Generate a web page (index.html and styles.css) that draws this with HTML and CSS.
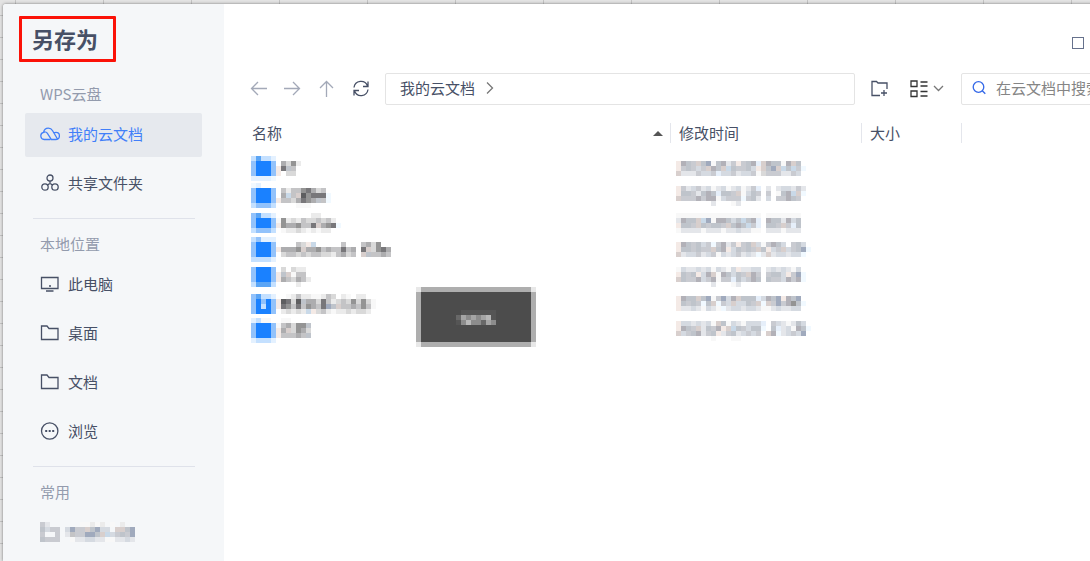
FILE: index.html
```html
<!DOCTYPE html>
<html lang="zh-CN">
<head>
  <meta charset="UTF-8">
  <meta name="viewport" content="width=device-width, initial-scale=1.0">
  <title>另存为</title>
  <link rel="stylesheet" href="styles.css">
</head>
<body>
  <div class="dialog">
    <aside class="sidebar">
      <h1 class="title">另存为</h1>

      <nav class="group">
        <h2>WPS云盘</h2>
        <a class="item active" href="#">
          <svg width="20" height="18" viewBox="0 0 20 18"><path d="M4.600 14.500H4.200A3.600 3.600 0 0 1 3.600 7.400C4 4.800 6 3.200 8.300 3.200c2 0 3.400.9 4.300 2.500l5.200 8.800M4.600 14.500h5.800M3.600 7.400c1-.6 2.900-.4 3.800.9l4 6.200h4.200c2.300 0 3.800-1.600 3.800-3.600s-1.500-3.500-3.400-3.500c-.8 0-1.500.2-2.100.5"/></svg>
          我的云文档
        </a>
        <a class="item" href="#">
          <svg width="20" height="18" viewBox="0 0 20 18"><circle cx="10" cy="4" r="3"/><circle cx="5" cy="13" r="3.200"/><circle cx="15" cy="13" r="3.200"/><path d="M10 7v2.500M7.500 10.800L10 9.500l2.500 1.300"/></svg>
          共享文件夹
        </a>
      </nav>

      <nav class="group">
        <h2>本地位置</h2>
        <a class="item" href="#">
          <svg width="20" height="18" viewBox="0 0 20 18"><path d="M1.500 2.500h16.500v11h-16.500zM6 16h7.500M9 11h2"/></svg>
          此电脑
        </a>
        <a class="item" href="#">
          <svg width="20" height="18" viewBox="0 0 20 18"><path d="M1.500 15.500v-13.500h5.500l2 2.500h9v11z"/></svg>
          桌面
        </a>
        <a class="item" href="#">
          <svg width="20" height="18" viewBox="0 0 20 18"><path d="M1.500 15.500v-13.500h5.500l2 2.500h9v11z"/></svg>
          文档
        </a>
        <a class="item" href="#">
          <svg width="20" height="18" viewBox="0 0 20 18"><circle cx="9.700" cy="9" r="8.200"/><path class="dots" d="M5.200 9h2M8.700 9h2M12.200 9h2"/></svg>
          浏览
        </a>
      </nav>

      <nav class="group">
        <h2>常用</h2>
        <a class="item" href="#" aria-label="常用文件夹"><svg class="mosaic" data-name="recent"></svg></a>
      </nav>
    </aside>

    <main class="main">
      <header class="titlebar">
        <button type="button" class="maximize" aria-label="最大化"></button>
      </header>

      <div class="toolbar">
        <div class="nav">
          <button type="button" class="dim" aria-label="后退"><svg width="18" height="18" viewBox="0 0 18 18"><path d="M17 8.500H1.500M8 2L1.500 8.500 8 15"/></svg></button>
          <button type="button" class="dim" aria-label="前进"><svg width="18" height="18" viewBox="0 0 18 18"><path d="M0 8.500h15.500M9 2L15.500 8.500 9 15"/></svg></button>
          <button type="button" class="dim" aria-label="向上"><svg width="18" height="18" viewBox="0 0 18 18"><path d="M8.500 17V1.500M2 8L8.500 1.500 15 8"/></svg></button>
          <button type="button" aria-label="刷新"><svg width="18" height="18" viewBox="0 0 18 18"><path d="M2 7.500a7 7 0 0 1 13.500-1.500M16 1.500v5h-5M16 9.500a7 7 0 0 1-13.500 1.500M2 15.500v-5h5"/></svg></button>
        </div>
        <div class="path">
          <a href="#">我的云文档</a>
          <svg width="10" height="16" viewBox="0 0 10 16"><path d="M2 2.500L7.500 8 2 13.500"/></svg>
        </div>
        <button type="button" class="new-folder" aria-label="新建文件夹"><svg width="18" height="18" viewBox="0 0 18 18"><path d="M9 15.500H1V1.500H5.500l1.500 1.500h9V9M13 10v6M10 13h6"/></svg></button>
        <button type="button" class="view" aria-label="视图"><svg width="34" height="18" viewBox="0 0 34 18"><path class="dark" d="M1 1h6v5.500H1zM1 11h6V16.500H1zM10.500 2h7M10.500 6h7M10.500 11.500h7M10.500 16h7"/><path d="M24 6l4.500 4.500 4.500-4.500"/></svg></button>
        <label class="search">
          <svg width="16" height="16" viewBox="0 0 16 16"><circle cx="6.500" cy="7" r="5.300"/><path d="M10.300 10.800l3 3"/></svg>
          <input type="text" placeholder="在云文档中搜索" aria-label="在云文档中搜索">
        </label>
      </div>

      <table class="files">
        <thead>
          <tr>
            <th class="col-name"><div>名称<span class="sort"></span></div></th>
            <th class="col-date"><div>修改时间</div></th>
            <th class="col-size"><div>大小</div></th>
            <th class="col-rest"><div></div></th>
          </tr>
        </thead>
        <tbody id="rows"></tbody>
      </table>

      <div class="toast" role="status"><svg class="mosaic" data-name="toast"></svg></div>
    </main>
  </div>
  <script src="script.js"></script>
</body>
</html>
```
FILE: styles.css
```css
body {
  margin: 0;
  height: 100vh;
  overflow: hidden;
  box-sizing: border-box;
  padding: 4px 0 0 3px;
  font-family: "Noto Sans CJK SC", sans-serif;
  font-size: 15px;
  line-height: 20px;
  color: #475066;
  /* sheet cells behind the dialog */
  background-color: #e3e3e3;
  background-image:
    linear-gradient(90deg, #c3c3c3 1px, transparent 1px),
    linear-gradient(#c3c3c3 1px, transparent 1px);
  background-size: 88px 22px;
  background-position: 15px 15px;
}

/* the dialog runs past the right edge of the window */
.dialog {
  display: flex;
  height: 100%;
  margin-right: -60px;
  background: #fff;
  border-top-left-radius: 3px;
  box-shadow: 0 0 3px rgba(0, 0, 0, 0.5);
}

svg {
  flex: none;
  fill: none;
  stroke: currentColor;
  stroke-width: 1.3;
}

a {
  color: inherit;
  text-decoration: none;
}

button {
  display: flex;
  padding: 0;
  border: none;
  background: none;
  color: #475066;
  cursor: pointer;
}

/* Sidebar */
.sidebar {
  box-sizing: border-box;
  flex: none;
  width: 221px;
  padding: 12px 22px 0;
  overflow: hidden;
  background: #f5f7f9;
  border-top-left-radius: 3px;
}

.title {
  box-sizing: border-box;
  width: 97px;
  height: 46px;
  margin: 0 0 10px -6px;
  padding-left: 10px;
  border: 3px solid #fb1208;
  border-radius: 1px;
  font-size: 22px;
  line-height: 38px;
}

.group {
  position: relative;
  padding: 12px 0;
}

.group + .group {
  padding-top: 16px;
}

.group + .group::before {
  content: "";
  position: absolute;
  top: 0;
  left: 8px;
  right: 7px;
  border-top: 1px solid #dfe2ea;
}

.group h2 {
  margin: 0 0 9px;
  padding-left: 15px;
  font-size: 15px;
  font-weight: normal;
  color: #939bad;
}

.item {
  box-sizing: border-box;
  display: flex;
  align-items: center;
  gap: 8px;
  height: 44px;
  padding: 0 0 2px 15px;
  border-radius: 2px;
}

.item + .item {
  margin-top: 5px;
}

.item.active {
  background: #e6e9ee;
  color: #417ff9;
}

.dots {
  stroke-width: 2;
}

/* Main area */
.main {
  position: relative;
  flex: 1;
  min-width: 0;
  padding-left: 26px;
}

.titlebar {
  display: flex;
  justify-content: flex-end;
  height: 36px;
  padding: 33px 66px 0 0;
}

.maximize {
  width: 12px;
  height: 12px;
  border: 1px solid #66718c;
}

.toolbar {
  display: flex;
  align-items: center;
  height: 32px;
  padding-right: 20px;
}

.nav {
  display: flex;
  gap: 16px;
  margin-right: 15px;
}

.dim {
  color: #a3a9b8;
}

.path,
.search {
  display: flex;
  align-items: center;
  box-sizing: border-box;
  height: 32px;
  padding-bottom: 2px;
  border: 1px solid #e4e4e4;
  border-radius: 2px;
}

.path {
  flex: 1;
  gap: 10px;
  padding-left: 14px;
}

.path svg {
  color: #777;
}

.new-folder {
  margin: 0 21px 0 16px;
}

.view {
  margin-right: 17px;
  color: #777;
}

.dark {
  stroke: #333;
}

.search {
  width: 169px;
  gap: 8px;
  padding-left: 10px;
}

.search svg {
  color: #3468e8;
}

.search input {
  min-width: 0;
  width: 100%;
  padding: 0;
  border: none;
  outline: none;
  font: inherit;
}

.search input::placeholder {
  color: #858585;
}

/* File list */
.files {
  width: 100%;
  margin-top: 18px;
  table-layout: fixed;
  border-collapse: collapse;
}

.files th {
  padding: 0 0 12px;
  font-weight: normal;
  text-align: left;
}

.files th div {
  display: flex;
  align-items: center;
  justify-content: space-between;
  height: 20px;
  padding-left: 8px;
  border-left: 1px solid #e4e6ec;
}

.files th.col-name div {
  padding: 0 7px 0 2px;
  border: none;
}

.col-date {
  width: 191px;
}

.col-size {
  width: 100px;
}

.col-rest {
  width: 189px;
}

.sort {
  border: 5px solid transparent;
  border-top: none;
  border-bottom: 5px solid #555;
}

.files td {
  height: 27px;
  padding: 0 0 0 1px;
}

.files td + td {
  padding-left: 6px;
}

.mosaic {
  display: block;
  stroke: none;
  shape-rendering: crispEdges;
}

/* Toast, over the list */
.toast {
  position: absolute;
  top: 283px;
  left: 192px;
  display: flex;
  align-items: center;
  justify-content: center;
  width: 110px;
  height: 50px;
  border: 5px solid #aeaeae;
  background: #4c4c4c;
}

/* lighter corner blocks */
.toast::before {
  content: "";
  position: absolute;
  inset: -5px;
  background:
    linear-gradient(#e8e8e8, #e8e8e8) 0 0,
    linear-gradient(#e8e8e8, #e8e8e8) 100% 0,
    linear-gradient(#e8e8e8, #e8e8e8) 0 100%,
    linear-gradient(#e8e8e8, #e8e8e8) 100% 100%;
  background-size: 5px 5px;
  background-repeat: no-repeat;
}
```
FILE: script.js
```js
// Names and dates are hidden behind 5px blocks, one letter per block
const CELL = 5;

const colors = {
  a: "#f8f8f8", b: "#ebebeb", c: "#d9d9d9", d: "#c4c4c6", e: "#adadaf",
  f: "#949494", g: "#78777a", h: "#5e5e60",
  p: "#f4eae6", q: "#c9d9e8", r: "#bfc4cb", s: "#a0aabd", t: "#d8cfcd",
  u: "#d5dae1", v: "#f1f9ff", w: "#e4e6ea", x: "#e6effa", y: "#b2b1b8", z: "#c9cbd1",
  1: "#c4e0ff", 2: "#92c2fb", 3: "#5ba5f5", 4: "#1a81ff", 5: "#e4f1ff",
  k: "#555555", l: "#686868", m: "#8c8c8c", n: "#a5a5a5", o: "#b8b8b8"
};

const files = [
  {
    name: ["13115", "24442.ecfb", "24442pgrd", "24442p.cc", "5555v"],
    date: ["pyrztrsarywzpzryxtyrraytr", "pzrzuztyrtqrzzruptrstqrqzv", "twwwzuuzxuuzwuuzaczzzwwzu"]
  },
  {
    name: ["v5...", "24442.dbddfgecd", "24442.eqdthfgggv", "24442pddcegferdv", "12221....aaa"],
    date: ["pzwuzwuawuawuawzx.w.wuuwzw", "prrzwryrxrrztaurz.z.aryqtv", "tzzzyzyyauzzzvzrw.u.zzyrz", ".......w...aw"]
  },
  {
    name: ["23115.......bb", "24442afbcbdccdcdb", "24442pfeefddgtefgv", "12221.abbcbababb"],
    date: ["aaaaaaaaaaaaaaaaa.aaaaaaa", "wyrrtqsayyrurqryx.yrrwyur", "prrztrzrrztryrqzx.rrztzxr", "awwwwawwwawwuwwaa.wwwawww"]
  },
  {
    name: ["12555", "24442....dcpq.....d...decf", "24442peeefteefdeddgde.gtcfge", "24442.cddcdcddccbdecd.trdded", "11115"],
    date: ["pyrzruzvzywzpzrtuazyru.zru", "prrzrzztrypurzrztrpuztuzrsv", "twuuzwuzauwuzwuwvwtwuuwuuv"]
  },
  {
    name: ["24442.c.cbb", "24442prtadd", "24442pedcedb", "13331....b"],
    date: ["auwwuwuauwaupwwuu.wuwuwau", "przrpuytayrurztyz.zrrupzsv", "trzzyuzyazzxruzyr.rzzuyzyv", ".......w...aw"]
  },
  {
    name: ["23115..abdbbaabdc.ba.bb", "24242phgchreecgdbcdcfcfca", "24142pgfdgdfedgsrtddedfda", "24442.bcbcbqpcdbabbcbccb"],
    date: ["pyrrtrsazsuytrrrxuyrspyrs", "przrzvrtvzutuurztvtzszyfrv", "pwwuwauwavwuuwuuwaawuwwuu"]
  },
  {
    name: ["51aa..aa", "24442adecffr", "24442petcfec", "24442pdddedr", "51115"],
    date: ["puuwuwuatrauwauuux.zuwawru", "pyrztwrzyptqrzurrv.rxwuayrv", "tuzrywzrpwzrwuzuz.tyvwuzus", ".......a...aa"]
  }
];

const blocks = {
  recent: ["zw......aabab.a.b", "ruzz.uszztrsuu.ttrs", "z..z.wdzzssrtquzrzs", "rzzz..awwuuwwaawwuw"],
  toast: [".kkkkkkk", "lnmnmnok", "kmommlnm"]
};

function drawMosaic(svg, rows) {
  const columns = Math.max(...rows.map(row => row.length));
  svg.setAttribute("width", columns * CELL);
  svg.setAttribute("height", rows.length * CELL);
  rows.forEach((row, y) => {
    [...row].forEach((key, x) => {
      if (!colors[key]) return;
      const rect = document.createElementNS("http://www.w3.org/2000/svg", "rect");
      rect.setAttribute("x", x * CELL);
      rect.setAttribute("y", y * CELL);
      rect.setAttribute("width", CELL);
      rect.setAttribute("height", CELL);
      rect.setAttribute("fill", colors[key]);
      svg.appendChild(rect);
    });
  });
}

const tbody = document.getElementById("rows");
files.forEach(file => {
  const tr = document.createElement("tr");
  tr.innerHTML = '<td><svg class="mosaic"></svg></td><td><svg class="mosaic"></svg></td><td></td><td></td>';
  const [name, date] = tr.querySelectorAll("svg");
  drawMosaic(name, file.name);
  drawMosaic(date, file.date);
  tbody.appendChild(tr);
});

document.querySelectorAll(".mosaic[data-name]").forEach(svg => {
  drawMosaic(svg, blocks[svg.dataset.name]);
});
```
